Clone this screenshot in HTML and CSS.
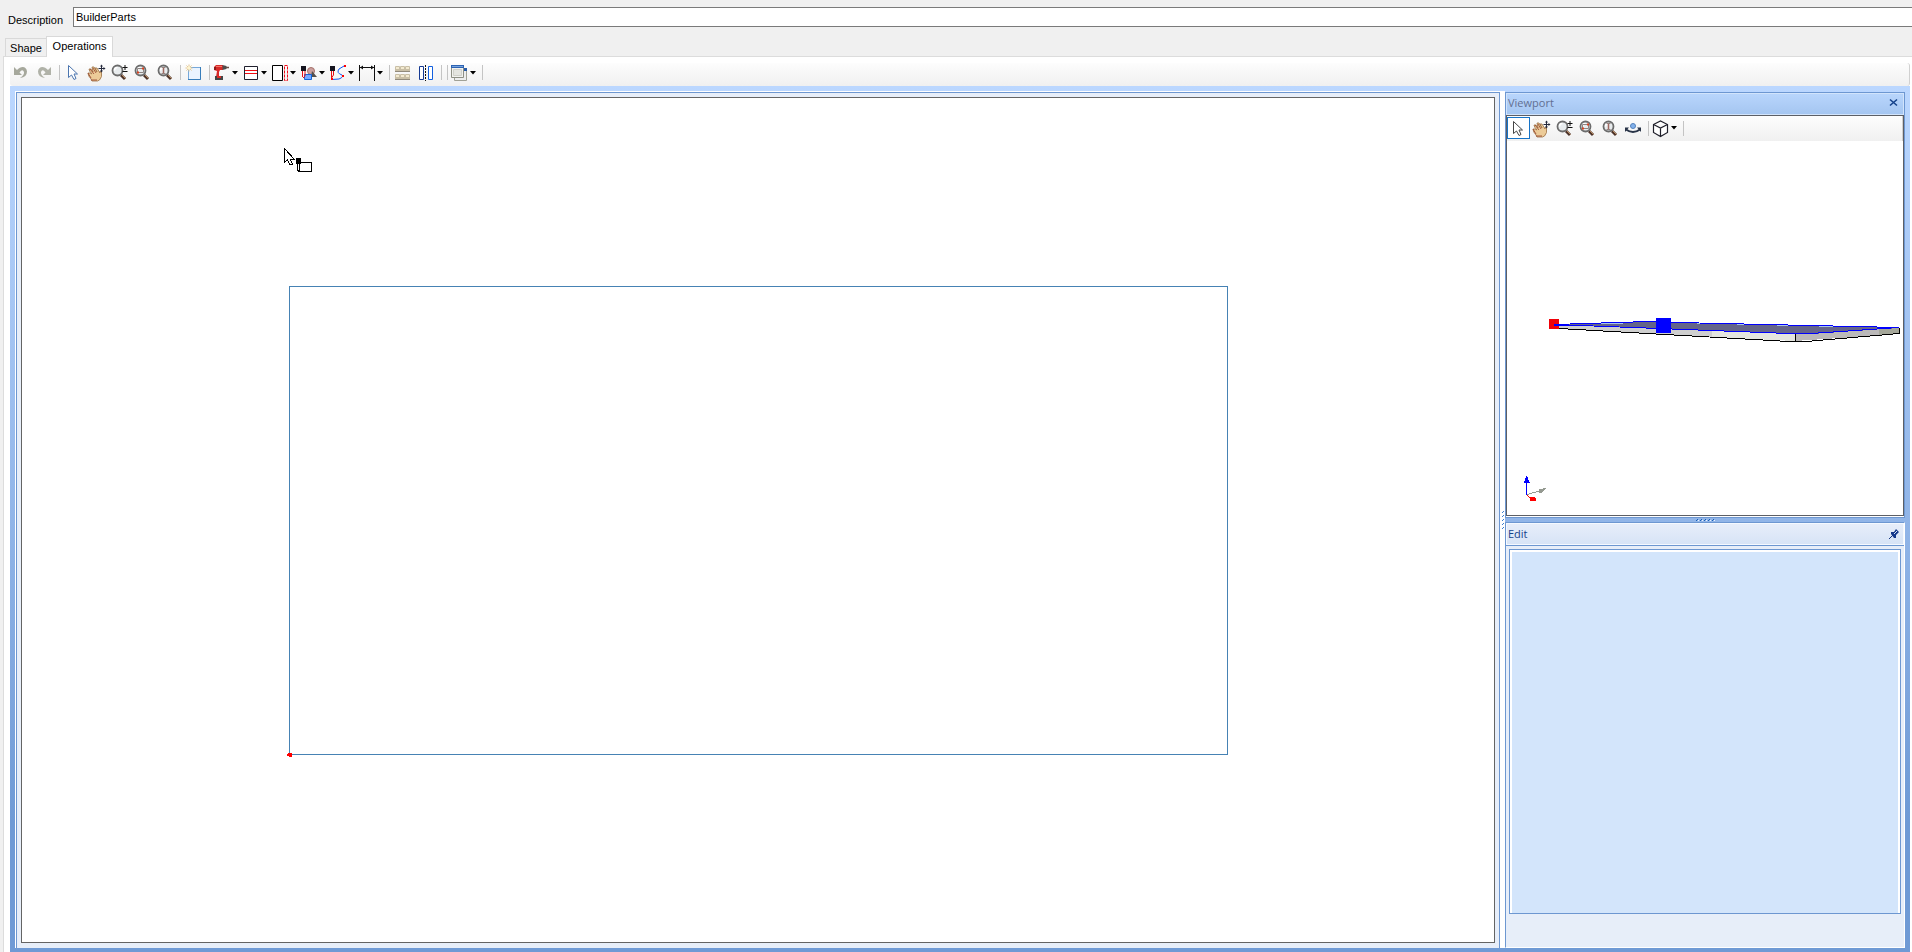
FILE: index.html
```
<!DOCTYPE html>
<html lang="en">
<head>
<meta charset="utf-8">
<title>Builder Parts</title>
<link rel="stylesheet" href="styles.css">
</head>
<body>
<svg class="defs" aria-hidden="true">
  <symbol id="undo" viewBox="0 0 19 19"><path d="M2 4v8h8L7.500 9.500Q10.500 5.500 12 9q.5 3-4 6 7-1 7-6.500C14.500 3 9 2.500 5 7z" fill="#a6a89c"/></symbol>
  <symbol id="redo" viewBox="0 0 19 19"><path d="M16 4v8H8l2.500-2.500Q7.500 5.500 6 9q-.5 3 4 6-7-1-7-6.500C3.500 3 9 2.500 13 7z" fill="#b0b2a8"/></symbol>
  <symbol id="arrow" viewBox="0 0 19 19"><path d="M4.500 2.500v12l3-2.500 2.500 4.500 2-1-2-4.500h3.500z" fill="#fff" stroke="currentColor"/></symbol>
  <symbol id="hand" viewBox="0 0 19 19"><path d="M4 16Q1 13 1 10l2 0 2 1Q2 8 2 6l2 0 2 3-1-5 2 0 3 5-2-4 2 0 3 5 0-2 1.500 1q1 5-2 8l-2 1H5z" fill="#eccb98" stroke="#9a7044" stroke-width=".8"/><path d="M4 17h6M3 6l4 5M6 5l3 5M1 10l3 5" stroke="#963f28" fill="none" stroke-width=".8"/><path d="M11.500 5.500h6M14.500 2.500v6" stroke="#252a3d" fill="none"/><path d="M13 3.500h3L14.500 1.500zM13 7.500h3l-1.500 2zM16.500 4v3l2-1.500z" fill="#252a3d"/></symbol>
  <symbol id="lens" viewBox="0 0 19 19"><path d="m11 12 4 4" stroke="#4d332a" stroke-width="3"/><path d="m12 12 3.500 3.500" stroke="#ba8e62"/><circle cx="7.500" cy="7.500" r="5" fill="#e8ecee" stroke="#6c6c6c" stroke-width="1.800"/><path d="M4.500 7.500q0-3 3-3" stroke="#fff" stroke-width="1.500" fill="none"/></symbol>
  <symbol id="zoompm" viewBox="0 0 19 19"><use href="#lens"/><path d="M12.500 4.500h5M15 2v5M12.500 8.500h5" stroke="#111"/></symbol>
  <symbol id="zoomwin" viewBox="0 0 19 19"><use href="#lens"/><path d="M4.500 5.500h6v4h-6z" stroke="#8d8482" fill="none"/><path d="M9 4.500h2v2H9zM4 8.500h2v2H4z" fill="#d9411f"/></symbol>
  <symbol id="zoomall" viewBox="0 0 19 19"><use href="#lens"/><path d="M7.500 4v7" stroke="#a0675f" stroke-width="1.500"/><path d="M5.500 4.500h4M5.500 10.500h4" stroke="#94817d"/></symbol>
  <symbol id="new" viewBox="0 0 19 19"><path d="M3.500 4.500h12v12h-12z" fill="#eaf4ff" stroke="#76a8da"/><path d="M15.500 4v12.500H3" stroke="#377dba" fill="none"/><path d="M4 1.500v7M.5 5h7M1.500 2.500l5 5M6.500 2.500l-5 5" stroke="#e3c48f"/><circle cx="4" cy="5" r="1.800" fill="#fff5cf"/></symbol>
  <symbol id="drill" viewBox="0 0 19 19"><path d="M1 4l2-2h7v5H7l-1 2v5H3l1-6-3-1z" fill="#d92a28"/><path d="M1 4h2v3H1z" fill="#8a1b1b"/><path d="M3 3.500h6" stroke="#f2776b"/><path d="M9.500 2l4 1v3l-4 1z" fill="#4d4d4d"/><path d="M13 4.500h3" stroke="#665047" stroke-width="1.500"/><path d="M2 13h8v4H2z" fill="#454545"/><path d="M4 13h4v2H4z" fill="#e02c26"/></symbol>
  <symbol id="saw" viewBox="0 0 19 19"><path d="M2.500 3.500h13v13h-13z" fill="#fff" stroke="#20202e"/><path d="M3 7.500h12M3 10.500h12" stroke="#f20c12"/></symbol>
  <symbol id="edge" viewBox="0 0 19 19"><path d="M1.500 2.500h10v15h-10z" fill="#fff" stroke="#000"/><path d="M13.500 2.500h3v15h-3z" fill="none" stroke="#f00d18" stroke-dasharray="3 1"/></symbol>
  <symbol id="shapes" viewBox="0 0 19 19"><circle cx="11" cy="8" r="3.500" fill="#caa0a0" stroke="#a67068"/><path d="M12 8l5 6h-6z" fill="#55504d"/><path d="M4.500 11.500h7v5h-7z" fill="#76a8ff" stroke="#1465d8"/><path d="M1 3h5v5H1z" fill="#15151f"/><path d="M2.500 8v6M5 8v5l-2 2" stroke="#e80f17" fill="none"/></symbol>
  <symbol id="curve" viewBox="0 0 19 19"><path d="M3 16.500l7-.5q5-2 3-4-6-2-3-6l5-3" fill="none" stroke="#1558ef"/><path d="M1 3h5v5H1z" fill="#15151f"/><path d="M2.500 8v7M4.500 8v4l-2 3" stroke="#e80f17" fill="none"/><path d="M15 2h2v2h-2zM2 15h2v2H2zM13 12h2v2h-2z" fill="#f00"/></symbol>
  <symbol id="dim" viewBox="0 0 19 19"><path d="M1.500 2v16M16.500 2v16M2 4.500h14" stroke="#111"/><path d="M2 4.500l3-2v4zM16 4.500l-3-2v4z" fill="#111"/></symbol>
  <symbol id="blocks" viewBox="0 0 19 19"><g fill="#c9bfa6"><rect x="1" y="3" width="5" height="6" rx="1"/><rect x="6" y="3" width="5" height="6" rx="1"/><rect x="11" y="3" width="5" height="6" rx="1"/><rect x="1" y="11" width="5" height="6" rx="1"/><rect x="6" y="11" width="5" height="6" rx="1"/><rect x="11" y="11" width="5" height="6" rx="1"/></g><path d="M2 5h3M7 5h3M12 5h3M2 13h3M7 13h3M12 13h3" stroke="#f3ead0" stroke-width="2"/><path d="M1 8.500h15M1 16.500h15" stroke="#918a7c"/></symbol>
  <symbol id="mirror" viewBox="0 0 19 19"><path d="M2.500 3.500h4v13h-4z" fill="#fff" stroke="#163a93"/><path d="M11.500 3.500h4v13h-4z" fill="#fff" stroke="#1260df"/><path d="M8.500 2v16" stroke="#111" stroke-dasharray="2 1"/></symbol>
  <symbol id="layers" viewBox="0 0 19 19"><path d="M3.500 5.500h12v12h-12z" fill="#eee" stroke="#a0a196"/><path d="M10 5h6v3h-6z" fill="#295ca7"/><path d="M.5 2.500h12v12H.5z" fill="#f2f2ef" stroke="#8e9085"/><path d="M2.500 6.500h8v6h-8z" fill="#e4e5e0" stroke="#d0d1ca"/><path d="M0 2h13v3H0z" fill="#2c63b2"/><path d="M1 3.500h11" stroke="#78a4df"/></symbol>
  <symbol id="orbit" viewBox="0 0 19 19"><path d="M2 10.500q7 5 14 0" fill="none" stroke="#293448" stroke-width="2"/><path d="M1 8.500h4l-4 4.500zM17 8.500h-4l4 4.500z" fill="#293448"/><circle cx="9" cy="7" r="2.500" fill="#83b2ec" stroke="#5381bb"/></symbol>
  <symbol id="cube" viewBox="0 0 19 19"><path d="M1.500 5.500l7-3.500 7 3.500v8l-7 4-7-4zM1.500 5.500l7 3.500 7-3.500M8.500 9v8" fill="#fff" stroke="#20202b" stroke-width="1.200"/></symbol>
  <symbol id="caret" viewBox="0 0 6 4"><path d="M0 0h6L3 3.500z"/></symbol>
</svg>
<main class="app">
  <div class="field">
    <label class="field-label" for="description">Description</label>
    <input class="field-input" id="description" type="text" value="BuilderParts">
  </div>
  <div class="tabs" role="tablist">
    <button class="tab" role="tab" aria-selected="false">Shape</button>
    <button class="tab tab-active" role="tab" aria-selected="true">Operations</button>
  </div>
  <section class="page">
    <div class="toolbar" role="toolbar">
      <button class="tool" aria-label="Undo"><svg class="icon"><use href="#undo"/></svg></button>
      <button class="tool" aria-label="Redo"><svg class="icon"><use href="#redo"/></svg></button>
      <span class="sep"></span>
      <button class="tool tool-select" aria-label="Select"><svg class="icon"><use href="#arrow"/></svg></button>
      <button class="tool" aria-label="Pan"><svg class="icon"><use href="#hand"/></svg></button>
      <button class="tool" aria-label="Zoom"><svg class="icon"><use href="#zoompm"/></svg></button>
      <button class="tool" aria-label="Zoom window"><svg class="icon"><use href="#zoomwin"/></svg></button>
      <button class="tool" aria-label="Zoom extents"><svg class="icon"><use href="#zoomall"/></svg></button>
      <span class="sep"></span>
      <button class="tool" aria-label="New"><svg class="icon"><use href="#new"/></svg></button>
      <span class="sep"></span>
      <button class="tool drop" aria-label="Drill"><svg class="icon"><use href="#drill"/></svg><svg class="caret"><use href="#caret"/></svg></button>
      <button class="tool drop" aria-label="Saw"><svg class="icon"><use href="#saw"/></svg><svg class="caret"><use href="#caret"/></svg></button>
      <button class="tool drop" aria-label="Edge"><svg class="icon"><use href="#edge"/></svg><svg class="caret"><use href="#caret"/></svg></button>
      <button class="tool drop" aria-label="Pocket"><svg class="icon"><use href="#shapes"/></svg><svg class="caret"><use href="#caret"/></svg></button>
      <button class="tool drop" aria-label="Route"><svg class="icon"><use href="#curve"/></svg><svg class="caret"><use href="#caret"/></svg></button>
      <button class="tool drop" aria-label="Dimension"><svg class="icon"><use href="#dim"/></svg><svg class="caret"><use href="#caret"/></svg></button>
      <span class="sep"></span>
      <button class="tool" aria-label="Array"><svg class="icon"><use href="#blocks"/></svg></button>
      <button class="tool" aria-label="Mirror"><svg class="icon"><use href="#mirror"/></svg></button>
      <span class="sep"></span>
      <span class="sep"></span>
      <button class="tool drop" aria-label="Windows"><svg class="icon"><use href="#layers"/></svg><svg class="caret"><use href="#caret"/></svg></button>
      <span class="sep"></span>
    </div>
    <div class="dock">
      <div class="pane">
        <div class="canvas">
          <svg class="drawing" viewBox="0 0 1472 844" shape-rendering="crispEdges">
            <path d="M267.500 188.500h938v468h-938z" fill="none" stroke="#4682b4"/>
            <path d="M266 655h4v4h-3v-1h-2v-2h1z" fill="#f00"/>
            <path d="M262.500 50.500v14l3-3 2 5 3 0-2-5h4z" fill="#fff" stroke="#000"/>
            <path d="M276.500 64.500h13v9h-13z" fill="#fff" stroke="#000"/>
            <path d="M274 60h5v6h-5z"/>
            <path d="M275.500 66v6h2v-6" fill="#fff" stroke="#000"/>
          </svg>
        </div>
      </div>
      <div class="vsplit"><svg class="vgrip" viewBox="0 0 3 18"><path d="M0 1.500h1M1 .5h1M0 5.500h1M1 4.500h1M0 9.500h1M1 8.500h1M0 13.500h1M1 12.500h1M0 17.500h1M1 16.500h1" stroke="#3c7fd0"/></svg></div>
      <aside class="side">
        <section class="panel">
          <header class="panel-head head-active">
            <h2 class="title">Viewport</h2>
            <button class="head-button" aria-label="Close"><svg class="head-icon" viewBox="0 0 12 12"><path d="M2 2.500l7 6M9 2.500l-7 6" stroke="#15428b" stroke-width="1.600"/></svg></button>
          </header>
          <div class="view">
            <div class="toolbar view-toolbar" role="toolbar">
              <button class="tool tool-on" aria-label="Select"><svg class="icon"><use href="#arrow"/></svg></button>
              <button class="tool" aria-label="Pan"><svg class="icon"><use href="#hand"/></svg></button>
              <button class="tool" aria-label="Zoom"><svg class="icon"><use href="#zoompm"/></svg></button>
              <button class="tool" aria-label="Zoom window"><svg class="icon"><use href="#zoomwin"/></svg></button>
              <button class="tool" aria-label="Zoom extents"><svg class="icon"><use href="#zoomall"/></svg></button>
              <button class="tool" aria-label="Orbit"><svg class="icon"><use href="#orbit"/></svg></button>
              <span class="sep"></span>
              <button class="tool drop" aria-label="View"><svg class="icon"><use href="#cube"/></svg><svg class="caret"><use href="#caret"/></svg></button>
              <span class="sep"></span>
            </div>
            <div class="scene">
              <svg class="drawing" viewBox="0 0 396 374" shape-rendering="crispEdges">
                <path d="M47 184L288 193V200L52 188z" fill="#cfcfcf"/>
                <path d="M205 190l83 3v7l-83-4z" fill="#e4e5df"/>
                <path d="M288 193l104-6v6l-104 7z" fill="#bbb9b9"/>
                <path d="M372 188l20-1v5l-20 2z" fill="#a5a79a"/>
                <path d="M47 183l95-3 28 1 222 6-87 6-17 0z" fill="#656589"/>
                <path d="M70 182.500h46M190 182.500h20M230 183.500h20M270 184.500h20M312 185.500h20" stroke="#a8c5e8"/>
                <path d="M47 183.500L142 180.500 170 181.500 392 186.500 304 192.500H282z" fill="none" stroke="#00f"/>
                <path d="M52 187.500L282 200.500H299L392 192.500V187" fill="none" stroke="#000"/>
                <path d="M288.500 193v7" stroke="#000"/>
                <path d="M42 178h10v10H42z" fill="#f00008"/>
                <path d="M47 183.500h15" stroke="#00f" stroke-width="2"/>
                <path d="M149 177h15v15h-15z" fill="#00f"/>
                <path d="M19.500 339v15" stroke="#00f"/><path d="M19 335h1l3 7h-6z" fill="#00f"/>
                <path d="M20 353.500l14-4" stroke="#959a91" fill="none"/><path d="M32 348l7-1-5 5h-2z" fill="#959a91"/>
                <path d="M20 354l4 4" stroke="#f00"/><path d="M23 356h4l2 2v2h-6z" fill="#f00"/>
              </svg>
            </div>
          </div>
        </section>
        <div class="hsplit"><svg class="hgrip" viewBox="0 0 19 3"><path d="M0 1.500h1M1 .5h1M4 1.500h1M5 .5h1M8 1.500h1M9 .5h1M12 1.500h1M13 .5h1M16 1.500h1M17 .5h1" stroke="#1960b8"/><path d="M2 1.500h1M6 1.500h1M10 1.500h1M14 1.500h1M18 1.500h1" stroke="#eaf3ff"/></svg></div>
        <section class="panel panel-edit">
          <header class="panel-head">
            <h2 class="title">Edit</h2>
            <button class="head-button" aria-label="Pin"><svg class="head-icon" viewBox="0 0 12 12"><path d="M1 11l4-4" stroke="#15357f"/><path d="M3 4l3 0 2-3 3 3-3 3 0 3-2 0-3-4z" fill="#16398b"/><path d="M6 6l3-3" stroke="#d8e5f6"/></svg></button>
          </header>
          <div class="edit-body"><div class="edit-box"></div></div>
        </section>
      </aside>
    </div>
  </section>
</main>
</body>
</html>
```
FILE: styles.css
```
* { box-sizing: border-box; }
body { margin: 0; font: 11px/14px "Liberation Sans", Arial, sans-serif; color: #000; background: #f0f0f0; }
button { border: 0; padding: 0; margin: 0; background: none; font: inherit; color: inherit; }
.defs { position: absolute; width: 0; height: 0; }
.app { display: flex; flex-direction: column; height: 100vh; overflow: hidden; }

.field { display: flex; align-items: flex-start; gap: 8px; padding: 7px 0 0 8px; }
.field-label { padding-top: 6px; width: 57px; }
.field-input { flex: 1; height: 20px; padding: 0 2px 1px; border: 1px solid #7a7a7a; border-right: 0; background: #fff; font: inherit; outline: 0; }

.tabs { display: flex; align-items: flex-end; padding: 9px 0 0 5px; position: relative; z-index: 1; }
.tab { height: 18px; width: 41px; border: 1px solid #d9d9d9; border-width: 1px 0 0 1px; background: #f0f0f0; }
.tab-active { height: 21px; width: 67px; padding-bottom: 2px; border-width: 1px 1px 0; background: #fff; margin-bottom: -1px; }

.page { flex: 1; min-height: 0; display: flex; flex-direction: column; margin: 0 0 0 3px; padding: 6px 2px 0 6px; border: 1px solid #dcdcdc; border-width: 1px 0 0 1px; background: #fff; }
.toolbar { display: flex; align-items: flex-start; height: 23px; background: linear-gradient(#fdfdfd, #f0f0f0); border-right: 1px solid #d0d0d0; border-radius: 3px; }
.tool { display: flex; align-items: center; width: 23px; height: 19px; padding-left: 2px; color: #454545; }
.tool-select { color: #4b75af; }
.drop { width: 29px; padding-left: 1px; }
.icon { width: 19px; height: 19px; flex: none; }
.caret { width: 6px; height: 4px; flex: none; fill: #000; }
.sep { width: 1px; height: 15px; margin: 2px 2px 0 3px; background: #c4c4c4; }

.dock { flex: 1; min-height: 0; display: flex; padding: 5px 5px 4px; background: linear-gradient(#bbd7ff, #91b5e8 50%, #6f9ad5 85%); }
.pane { flex: 1; display: flex; min-width: 0; padding: 4px 4px 5px; border: 1px solid #6d97d1; border-bottom: 0; background: #e7eef9; box-shadow: 0 0 0 1px #fff; margin: 1px 0 0 1px; clip-path: inset(-1px -1px 0 -1px); }
.canvas { flex: 1; position: relative; border: 1px solid #646464; background: #fff; }
.drawing { position: absolute; inset: 0; width: 100%; height: 100%; }
.vsplit { display: flex; align-items: center; justify-content: center; width: 5px; background: #fff; border-left: 1px solid #bcd7fc; }
.vgrip { width: 3px; height: 18px; }

.side { display: flex; flex-direction: column; flex: none; width: 400px; padding-top: 1px; }
.panel { display: flex; flex-direction: column; flex: 1; border: 1px solid #6d97d1; background: #e7eef9; }
.panel-edit { border-bottom-color: #fff; border-right-color: #fff; }
.panel-head { display: flex; align-items: center; justify-content: space-between; height: 22px; padding: 0 3px 0 1px; border: 1px solid #f5f9ff; background: linear-gradient(#e7eefa, #d7e4f6); color: #15428b; }
.head-active { padding-bottom: 2px; background: linear-gradient(#b8d5fc, #a5c6f1); border-color: #d2e4fb; color: #626f92; }
.title { margin: 0; font: 11px/18px "Open Sans", sans-serif; }
.head-button { display: flex; }
.head-icon { width: 12px; height: 12px; }
.view { flex: 1; display: flex; flex-direction: column; margin-bottom: 1px; border: 1px solid #5c5f66; background: #fff; outline: 1px solid #fff; outline-offset: 0; clip-path: inset(0 0 -1px 0); }
.view-toolbar { height: 25px; padding-top: 1px; border-radius: 0; flex: none; }
.view-toolbar .tool { height: 22px; }
.view-toolbar .sep { margin-top: 4px; }
.tool-on { border: 1px solid #1673c7; padding-left: 1px; background: #fff; }
.scene { flex: 1; position: relative; }
.hsplit { display: flex; align-items: center; justify-content: center; height: 4px; }
.hgrip { width: 19px; height: 3px; }
.edit-body { flex: 1; display: flex; padding: 3px 3px 33px; border-top: 1px solid #6d97d1; }
.edit-box { flex: 1; border: 1px solid #6d97d1; background: #d3e5fb; box-shadow: inset 2px 0 #fff, inset -2px 0 #fff, inset 0 2px #fff; }
```
